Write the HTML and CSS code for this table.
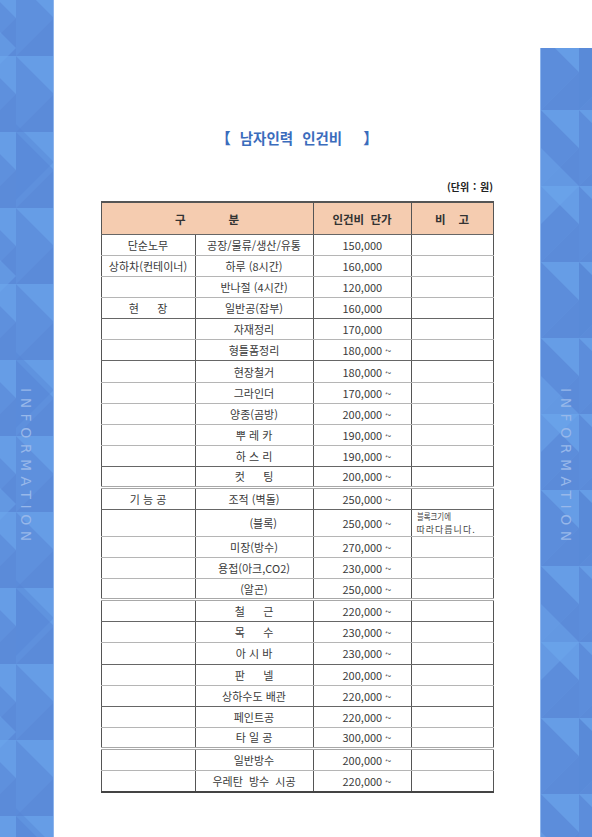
FILE: index.html
```html
<!DOCTYPE html>
<html lang="ko">
<head>
<meta charset="utf-8">
<title>남자인력 인건비</title>
<link rel="stylesheet" href="styles.css">
</head>
<body>
<div class="page">
  <aside class="strip strip-left">
    <svg class="tri" width="100%" height="100%" aria-hidden="true">
      <defs>
        <pattern id="pl" width="38" height="76" patternUnits="userSpaceOnUse" patternTransform="translate(16 -20)">
          <rect width="38" height="76" fill="#6195e0"/>
          <polygon points="0,0 38,38 0,76" fill="#5e90dd"/>
          <polygon points="0,0 38,0 38,38" fill="#669de6"/>
          <polygon points="0,76 38,38 38,76" fill="#5b8bd9"/>
        </pattern>
        <pattern id="pl2" width="76" height="228" patternUnits="userSpaceOnUse" patternTransform="translate(-22 10)">
          <polygon points="0,0 38,38 0,76" fill="#6ca8ee" opacity="0.45"/>
          <polygon points="38,114 76,152 38,190" fill="#5584d4" opacity="0.4"/>
        </pattern>
      </defs>
      <rect width="100%" height="100%" fill="url(#pl)"/>
      <rect width="100%" height="100%" fill="url(#pl2)"/>
    </svg>
    <span class="vtext">INFORMATION</span>
  </aside>

  <main class="content">
    <h1 class="title"><span class="br">【</span><span class="tt">남자인력 인건비</span><span class="br">】</span></h1>
    <p class="unit">(단위 : 원)</p>
    <table class="price">
      <colgroup>
        <col class="c1"><col class="c2"><col class="c3"><col class="c4">
      </colgroup>
      <thead>
        <tr class="head">
          <th colspan="2"><span class="h-gu">구</span><span>분</span></th>
          <th class="h-price">인건비 단가</th>
          <th>비&nbsp;&nbsp;&nbsp;&nbsp;고</th>
        </tr>
      </thead>
      <tbody>
        <tr><td>단순노무</td><td>공장/물류/생산/유통</td><td class="num">150,000</td><td></td></tr>
        <tr><td>상하차(컨테이너)</td><td>하루 (8시간)</td><td class="num">160,000</td><td></td></tr>
        <tr><td></td><td>반나절 (4시간)</td><td class="num">120,000</td><td></td></tr>
        <tr class="d"><td class="pre">현      장</td><td>일반공(잡부)</td><td class="num">160,000</td><td></td></tr>
        <tr><td></td><td>자재정리</td><td class="num">170,000</td><td></td></tr>
        <tr class="d"><td></td><td>형틀폼정리</td><td class="num">180,000 ~</td><td></td></tr>
        <tr><td></td><td>현장철거</td><td class="num">180,000 ~</td><td></td></tr>
        <tr><td></td><td>그라인더</td><td class="num">170,000 ~</td><td></td></tr>
        <tr><td></td><td>양종(곰방)</td><td class="num">200,000 ~</td><td></td></tr>
        <tr><td></td><td class="pre">뿌 레 카</td><td class="num">190,000 ~</td><td></td></tr>
        <tr class="d"><td></td><td class="pre">하 스 리</td><td class="num">190,000 ~</td><td></td></tr>
        <tr class="w"><td></td><td class="pre">컷      팅</td><td class="num">200,000 ~</td><td></td></tr>
        <tr class="d"><td class="pre">기 능 공</td><td>조적 (벽돌)</td><td class="num">250,000 ~</td><td></td></tr>
        <tr class="tall"><td></td><td class="pre">      (블록)</td><td class="num">250,000 ~</td><td class="note"><span class="n1">블록크기에</span><span class="n2">따라다릅니다.</span></td></tr>
        <tr><td></td><td>미장(방수)</td><td class="num">270,000 ~</td><td></td></tr>
        <tr><td></td><td>용접(아크,CO2)</td><td class="num">230,000 ~</td><td></td></tr>
        <tr class="w"><td></td><td>(알곤)</td><td class="num">250,000 ~</td><td></td></tr>
        <tr class="d"><td></td><td class="pre">철      근</td><td class="num">220,000 ~</td><td></td></tr>
        <tr><td></td><td class="pre">목      수</td><td class="num">230,000 ~</td><td></td></tr>
        <tr class="d"><td></td><td class="pre">아 시 바</td><td class="num">230,000 ~</td><td></td></tr>
        <tr><td></td><td class="pre">판      넬</td><td class="num">200,000 ~</td><td></td></tr>
        <tr class="d"><td></td><td>상하수도 배관</td><td class="num">220,000 ~</td><td></td></tr>
        <tr><td></td><td>페인트공</td><td class="num">220,000 ~</td><td></td></tr>
        <tr class="w"><td></td><td class="pre">타 일 공</td><td class="num">300,000 ~</td><td></td></tr>
        <tr><td></td><td>일반방수</td><td class="num">200,000 ~</td><td></td></tr>
        <tr class="last"><td></td><td class="pre">우레탄  방수  시공</td><td class="num">220,000 ~</td><td></td></tr>
      </tbody>
    </table>
  </main>

  <div class="right-col">
    <aside class="strip strip-right">
      <svg class="tri" width="100%" height="100%" aria-hidden="true">
        <defs>
          <pattern id="pr" width="38" height="76" patternUnits="userSpaceOnUse" patternTransform="translate(0 -14)">
            <rect width="38" height="76" fill="#6195e0"/>
            <polygon points="0,0 38,38 0,76" fill="#5c8ddb"/>
            <polygon points="0,0 38,0 38,38" fill="#669de6"/>
            <polygon points="0,76 38,38 38,76" fill="#5b8bd9"/>
          </pattern>
          <pattern id="pr2" width="76" height="228" patternUnits="userSpaceOnUse" patternTransform="translate(0 100)">
            <polygon points="0,0 38,38 0,76" fill="#6ca8ee" opacity="0.45"/>
            <polygon points="38,114 76,152 38,190" fill="#5584d4" opacity="0.4"/>
          </pattern>
        </defs>
        <rect width="100%" height="100%" fill="url(#pr)"/>
        <rect width="100%" height="100%" fill="url(#pr2)"/>
      </svg>
      <span class="vtext">INFORMATION</span>
    </aside>
  </div>
</div>
</body>
</html>
```

FILE: styles.css
```css
html, body {
  margin: 0;
  padding: 0;
  background: #ffffff;
}

.page {
  display: flex;
  width: 592px;
  height: 837px;
  overflow: hidden;
}

.strip {
  position: relative;
  display: flex;
  justify-content: center;
  box-sizing: border-box;
  background: #6195e0;
}

.strip-left {
  width: 54px;
  height: 837px;
  padding-top: 388px;
  border-right: 1px solid #8db4ec;
}

.right-col {
  width: 52px;
  padding-top: 48px;
  box-sizing: border-box;
}

.strip-right {
  width: 52px;
  height: 789px;
  padding-top: 340px;
  border-left: 1px solid #8db4ec;
}

.tri {
  position: absolute;
  left: 0;
  top: 0;
  display: block;
}

.vtext {
  position: relative;
  writing-mode: vertical-rl;
  font-family: "DejaVu Sans", "Liberation Sans", sans-serif;
  font-size: 14px;
  letter-spacing: 5.5px;
  color: #98b8ea;
  line-height: 1;
}

.strip-left .vtext {
  margin-left: -1px;
}

.strip-right .vtext {
  margin-left: -2px;
}

.content {
  flex: 1;
  padding-top: 127px;
  font-family: "Noto Sans CJK KR", "Noto Sans", sans-serif;
  color: #333;
}

.title {
  margin: 0;
  display: flex;
  justify-content: center;
  align-items: center;
  font-size: 14.5px;
  line-height: 22px;
  font-weight: 700;
  color: #3b6cbc;
}

.tt {
  margin: 0 21px 0 9px;
  word-spacing: 5px;
}

.br {
  font-size: 15px;
}

.unit {
  width: 392px;
  margin: 31px auto 7px;
  text-align: right;
  font-size: 10px;
  line-height: 14px;
  font-weight: 700;
  word-spacing: 1px;
  color: #222;
}

.price {
  width: 392px;
  margin: 0 auto;
  border-collapse: collapse;
  table-layout: fixed;
  font-size: 11px;
}

.c1 { width: 94px; }
.c2 { width: 118px; }
.c3 { width: 98px; }
.c4 { width: 82px; }

.price th,
.price td {
  padding: 0;
  border-left: 1px solid #555;
  border-right: 1px solid #555;
  line-height: 14px;
  text-align: center;
  vertical-align: middle;
  white-space: nowrap;
}

.price th {
  height: 31px;
  background: #f5ccb0;
  border-top: 2px solid #555;
  border-bottom: 1px solid #666;
  font-weight: 700;
  font-size: 11.5px;
  color: #333;
}

.h-gu {
  margin-right: 43px;
}

.h-price {
  word-spacing: 3px;
}

.price td {
  height: 20.08px;
  border-bottom: 1px solid #b5b5b5;
  color: #3a3a3a;
}

.price tr.d td {
  border-bottom: 1px solid #666;
}

.price tr.w td {
  height: 19.1px;
  border-bottom: 3px double #a8a8a8;
}

.price tr.last td {
  border-bottom: 2px solid #444;
}

.price tr.tall td {
  height: 25px;
}

.price td.pre {
  white-space: pre;
}

.price td.num {
  text-align: left;
  padding-left: 29px;
}

.price td.note {
  text-align: left;
  padding-left: 5px;
  font-size: 9px;
  line-height: 13px;
  color: #444;
}

.n1,
.n2 {
  display: block;
}

.n1 {
  transform: scaleX(0.82);
  transform-origin: left center;
}

.n2 {
  letter-spacing: 1px;
}
```
